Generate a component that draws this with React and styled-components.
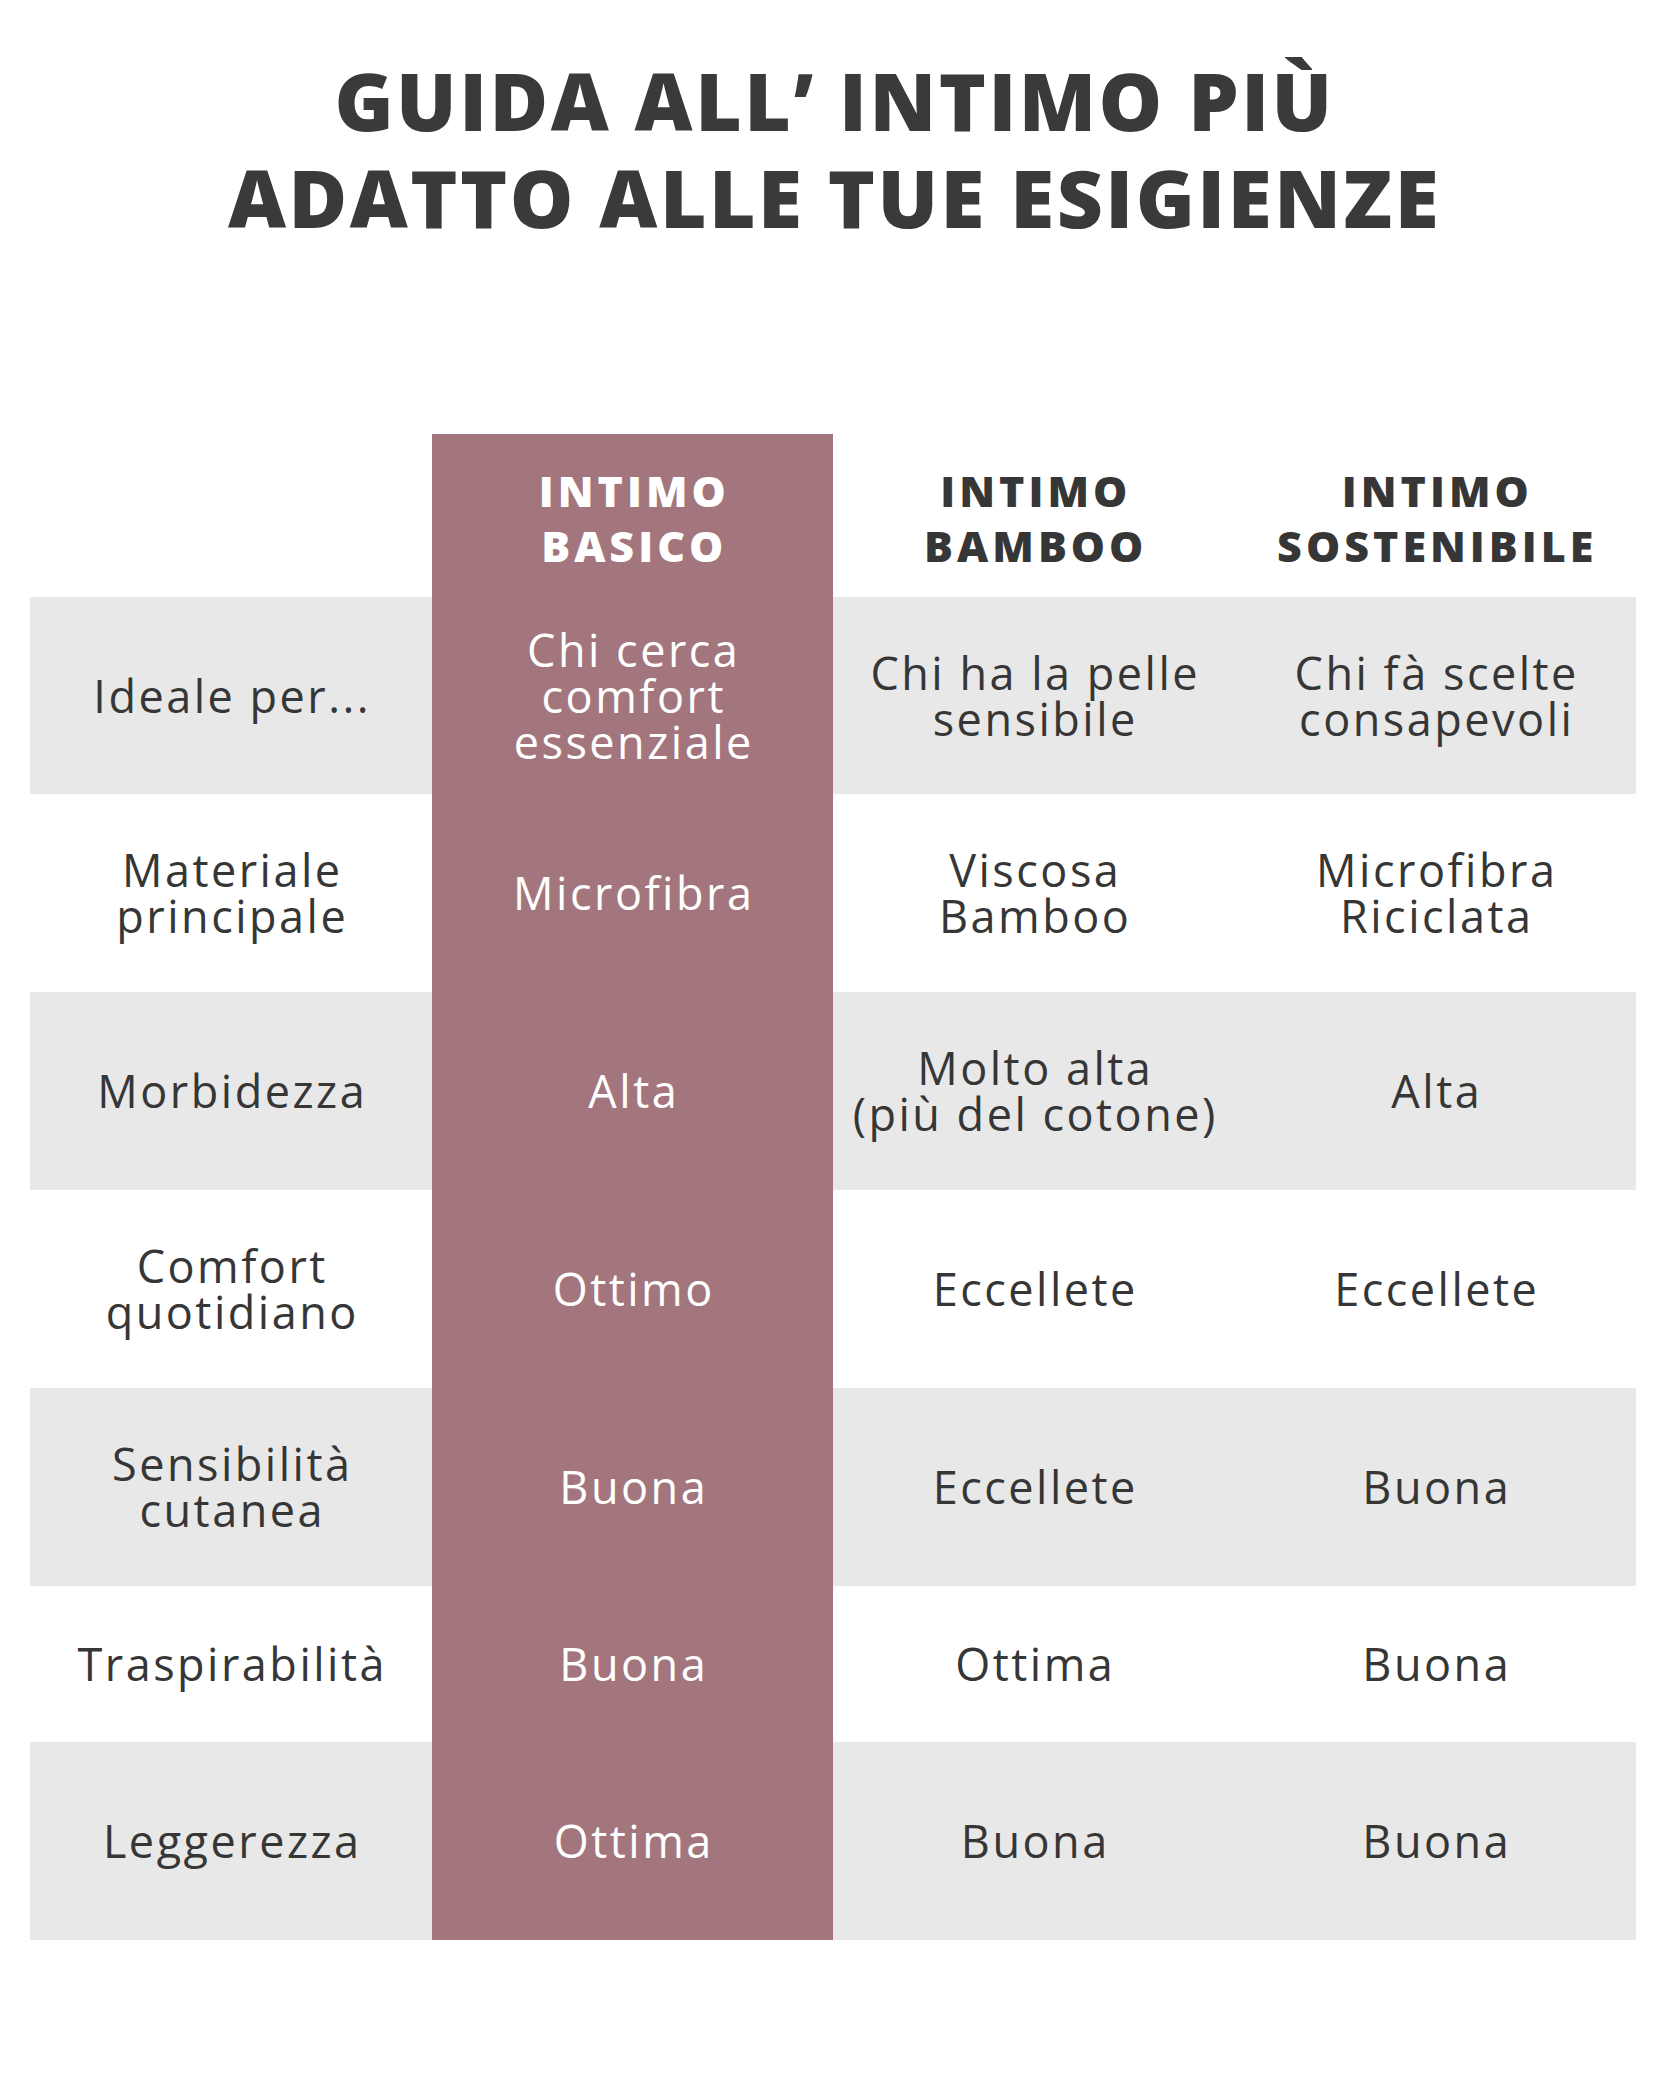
import React from "react";
import styled, { createGlobalStyle } from "styled-components";

const GlobalStyle = createGlobalStyle`
  html, body {
    margin: 0;
    padding: 0;
    background: #ffffff;
  }
  body {
    font-family: "Open Sans", Lato, sans-serif;
    color: #363636;
  }
`;

const Page = styled.div`
  width: 1667px;
  min-height: 2083px;
  padding-top: 51px;
  box-sizing: border-box;
`;

const Title = styled.h1`
  margin: 0;
  padding-left: 2px;
  font-family: "Open Sans", sans-serif;
  font-weight: 800;
  font-size: 80px;
  line-height: 97px;
  text-align: center;
  color: #3a3a3a;
  letter-spacing: 2.5px;
`;

const Table = styled.div`
  margin: 189px 0 0 30px;
  width: 1606px;
  display: flex;
  flex-direction: column;
`;

const Row = styled.div`
  display: grid;
  grid-template-columns: repeat(4, 1fr);
  height: ${(p) => p.$h}px;
  background: ${(p) => (p.$shaded ? "#e8e8e8" : "transparent")};
`;

const Cell = styled.div`
  display: flex;
  align-items: center;
  justify-content: center;
  text-align: center;
  padding: 0 6px 0 9px;
  font-size: 45px;
  line-height: 46px;
  font-weight: 400;
  letter-spacing: 2.5px;
  color: ${(p) => (p.$accent ? "#ffffff" : "#363636")};
  background: ${(p) => (p.$accent ? "#a3767d" : "transparent")};
`;

const HeadCell = styled(Cell)`
  font-size: 43px;
  line-height: 55px;
  font-weight: 800;
  letter-spacing: 4px;
  padding: 4px 4px 0 8px;
`;

const columns = [
  ["INTIMO", "BASICO"],
  ["INTIMO", "BAMBOO"],
  ["INTIMO", "SOSTENIBILE"],
];

const rows = [
  { label: ["Ideale per..."], values: [["Chi cerca", "comfort", "essenziale"], ["Chi ha la pelle", "sensibile"], ["Chi fà scelte", "consapevoli"]], h: 197 },
  { label: ["Materiale", "principale"], values: [["Microfibra"], ["Viscosa", "Bamboo"], ["Microfibra", "Riciclata"]], h: 198 },
  { label: ["Morbidezza"], values: [["Alta"], ["Molto alta", "(più del cotone)"], ["Alta"]], h: 198 },
  { label: ["Comfort", "quotidiano"], values: [["Ottimo"], ["Eccellete"], ["Eccellete"]], h: 198 },
  { label: ["Sensibilità", "cutanea"], values: [["Buona"], ["Eccellete"], ["Buona"]], h: 198 },
  { label: ["Traspirabilità"], values: [["Buona"], ["Ottima"], ["Buona"]], h: 156 },
  { label: ["Leggerezza"], values: [["Ottima"], ["Buona"], ["Buona"]], h: 198 },
];

function Lines({ lines }) {
  return (
    <span>
      {lines.map((l, i) => (
        <React.Fragment key={i}>
          {i > 0 && <br />}
          {l}
        </React.Fragment>
      ))}
    </span>
  );
}

export default function App() {
  return (
    <>
      <GlobalStyle />
      <Page>
        <Title>
          GUIDA ALL’ INTIMO PIÙ
          <br />
          ADATTO ALLE TUE ESIGIENZE
        </Title>
        <Table>
          <Row $h={163}>
            <Cell />
            {columns.map((c, i) => (
              <HeadCell key={i} $accent={i === 0}>
                <Lines lines={c} />
              </HeadCell>
            ))}
          </Row>
          {rows.map((r, idx) => (
            <Row key={idx} $h={r.h} $shaded={idx % 2 === 0}>
              <Cell>
                <Lines lines={r.label} />
              </Cell>
              {r.values.map((v, i) => (
                <Cell key={i} $accent={i === 0}>
                  <Lines lines={v} />
                </Cell>
              ))}
            </Row>
          ))}
        </Table>
      </Page>
    </>
  );
}
